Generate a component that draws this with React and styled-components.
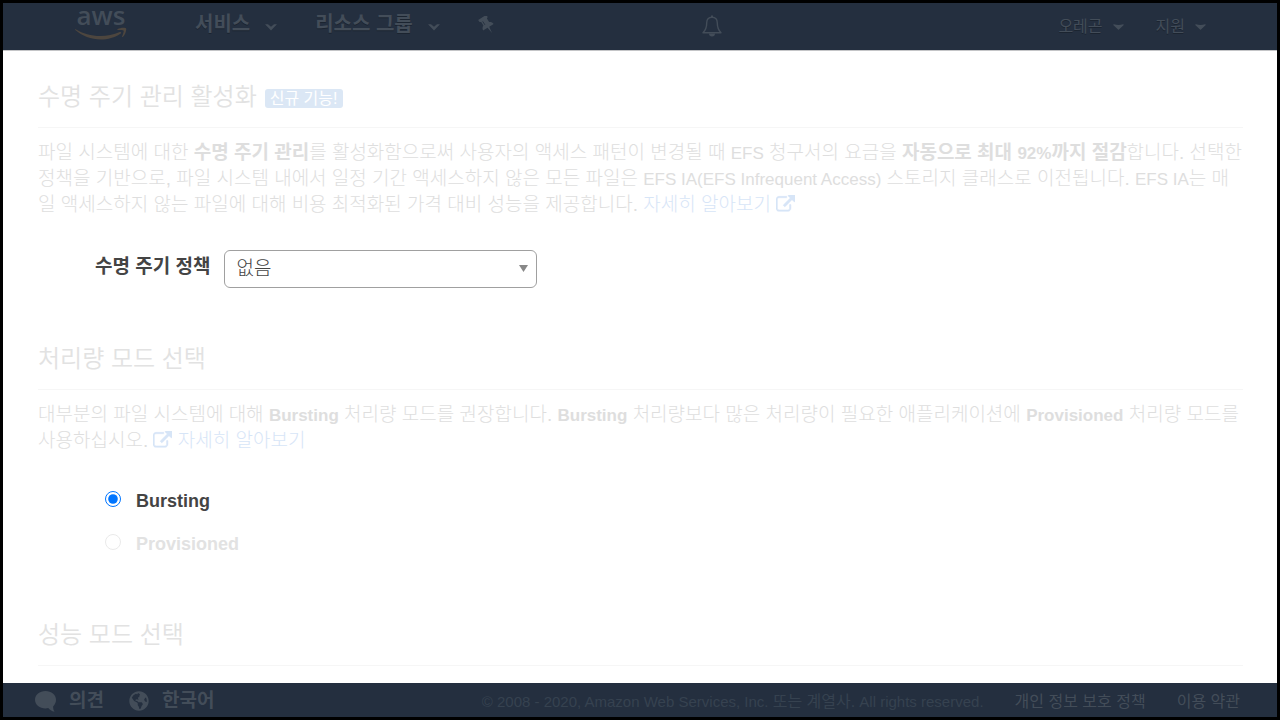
import React, { useState } from 'react'
import styled, { createGlobalStyle } from 'styled-components'
import { FaGlobeAmericas } from 'react-icons/fa'

const GlobalStyle = createGlobalStyle`
    *{
        box-sizing:border-box;
    }
    body{
        margin:0;
        font-family:'Liberation Sans', 'Noto Sans CJK KR', sans-serif;
    }
`
const Page = styled.div`
    min-height:100vh;
    display:flex;
    flex-direction:column;
    border:3px solid #000;
    background:#fff;
`
const Header = styled.header`
    height:48px;
    display:flex;
    align-items:flex-start;
    padding:0 71px 0 72px;
    background:#242f3f;
    border-bottom:1px solid #c4c5c7;
    color:#434d59;
`
const Logo = styled.a`
    width:52px;
    display:flex;
    flex-direction:column;
    align-items:center;
    color:#434d59;
    text-decoration:none;
    font:600 26px/24px 'Open Sans', sans-serif;
`
const Smile = styled.svg`
    width:52px;
    height:13px;
    fill:#4d463f;
`
const Nav = styled.nav`
    display:flex;
    align-items:center;
    height:42px;
    gap:38px;
    margin-left:68px;
`
const NavButton = styled.button`
    display:flex;
    align-items:center;
    gap:${props => props.$small ? '10px' : '15px'};
    padding:0;
    border:0;
    background:none;
    color:inherit;
    font-family:inherit;
    font-size:${props => props.$small ? '16px' : '20px'};
    font-weight:${props => props.$small ? 400 : 700};
    line-height:26px;
    text-shadow:0 1px 0 #1b2430;

    svg{
        display:block;
        margin-top:${props => props.$small ? '0' : '6px'};
    }
`
const PinButton = styled(NavButton)`
    svg{
        margin-top:2px;
    }
`
const Account = styled.div`
    display:flex;
    align-items:center;
    gap:32px;
    height:48px;
    margin-left:336px;
`
const BellButton = styled(NavButton)`
    height:46px;
    margin-left:auto;
`
const Main = styled.main`
    flex:1;
    padding:26px 34px 17px 35px;
    color:#dedede;
    font-size:19px;
    line-height:26px;
    font-weight:300;
`
const Section = styled.section`
    & + &{
        margin-top:51px;
    }
`
const Title = styled.h2`
    display:flex;
    align-items:center;
    gap:8px;
    margin:0;
    padding:2px 0 12px;
    border-bottom:1px solid #f6f6f6;
    color:#e2e2e2;
    font-size:24px;
    line-height:36px;
    font-weight:350;
`
const Badge = styled.span`
    height:19px;
    margin-top:2px;
    padding:0 5px;
    border-radius:3px;
    background:#dbe7f5;
    color:#fff;
    font-size:16px;
    line-height:19px;
    font-weight:400;
`
const Text = styled.p`
    margin:12px -2px 0 0;

    b{
        font-weight:700;
    }
`
const Latin = styled.span`
    font-size:17px;
    line-height:1;
`
const MoreLink = styled.a`
    color:#d7e5f7;
    text-decoration:none;

    svg{
        width:19px;
        height:19px;
        vertical-align:-3px;
        fill:currentColor;
        stroke:currentColor;
        stroke-width:50px;
    }
`
const Field = styled.div`
    display:flex;
    align-items:center;
    gap:14px;
    margin:32px 0 0 57px;
    color:#444;
`
const FieldLabel = styled.label`
    padding-bottom:4px;
    font-weight:700;
`
const SelectBox = styled.div`
    position:relative;
    flex:0 1 313px;

    svg{
        position:absolute;
        right:9px;
        top:15px;
        fill:#888;
        pointer-events:none;
    }
`
const Select = styled.select`
    display:block;
    width:100%;
    height:38px;
    padding:0 11px 2px;
    appearance:none;
    border:1px solid #a0a0a0;
    border-radius:6px;
    background:#fff;
    color:#444;
    font-family:inherit;
    font-size:19px;
    font-weight:300;
`
const Options = styled.div`
    margin:24px 0 0 67px;
`
const Option = styled.label`
    display:flex;
    align-items:center;
    gap:15px;
    height:43px;
    color:${props => props.$active ? '#444' : '#e2e2e2'};
    font-size:18px;
    font-weight:700;

    input{
        width:16px;
        height:16px;
        margin:0 0 2px;
        opacity:${props => props.$active ? 1 : 0.15};
    }
    span{
        padding-top:2px;
    }
`
const Footer = styled.footer`
    height:34px;
    display:flex;
    align-items:center;
    padding:2px 37px 0 32px;
    background:#242f3f;
    color:#434d59;
`
const FooterButton = styled.button`
    display:flex;
    align-items:center;
    gap:13px;
    margin-right:25px;
    padding:0;
    border:0;
    background:none;
    color:inherit;
    font-family:inherit;
    font-size:19px;
    font-weight:700;
    line-height:26px;
`
const Copyright = styled.span`
    margin-left:auto;
    padding-top:2px;
    color:#364250;
    font-size:15px;
    line-height:26px;

    span{
        font-size:16px;
        line-height:1;
    }
`
const FooterLink = styled.a`
    margin-left:31px;
    padding-top:2px;
    color:inherit;
    font-size:16px;
    line-height:26px;
    text-decoration:none;
`

const Chevron = () => (
    <svg width="12" height="8" viewBox="0 0 12 8" fill="currentColor">
        <path d="M0 1.2h3L6 3.8l3-2.6h3L6 7.6z"/>
    </svg>
)

const Caret = () => (
    <svg width="11" height="6" viewBox="0 0 11 6" fill="currentColor">
        <path d="M1 .3Q5.500 1.600 10 .3q1.300.1.500 1L6 5.600q-.5.400-1 0L.5 1.300Q-.3.400 1 .3z"/>
    </svg>
)

const Pin = () => (
    <svg width="18" height="18" viewBox="0 0 18 18" fill="currentColor">
        <path transform="rotate(-32 9 9)" d="M4.200 0h9.600v2.600l-1.400.8v4.200c1.600.7 2.600 1.900 2.800 4H10L9 18.500l-1-6.900H2.800c.2-2.100 1.200-3.300 2.800-4V3.400l-1.400-.8z"/>
        <path transform="rotate(-32 9 9)" d="M7.300 3.600v4.200" stroke="#242f3f" strokeWidth=".8"/>
    </svg>
)

const Bell = () => (
    <svg width="20" height="22" viewBox="0 0 20 22" fill="none" stroke="currentColor" strokeWidth="1.400">
        <path d="M10 2.200C6.300 2.200 4.700 4.700 4.700 8c0 5-1.200 7.300-3.700 9.800h18c-2.500-2.500-3.700-4.800-3.700-9.800 0-3.300-1.600-5.800-5.300-5.800z" strokeLinejoin="round"/>
        <path d="M10 .5v1.700" strokeWidth="2"/>
        <path d="M7 18.400a3 3 0 0 0 6 0z" fill="currentColor" stroke="none"/>
    </svg>
)

const Bubble = () => (
    <svg width="21" height="21" viewBox="0 0 21 21" fill="currentColor">
        <path d="M10.500 0C4.700 0 0 3.800 0 8.700s4.700 8.700 10.500 8.700c1 0 1.900-.1 2.800-.3 1.300 1.600 3.500 3.200 6.200 3.700-1-1.500-1.500-3.700-1.300-5.600 1.700-1.600 2.800-3.900 2.800-6.500C21 3.800 16.300 0 10.500 0z"/>
    </svg>
)

const External = () => (
    <svg viewBox="0 0 1792 1792">
        <path d="M1408 928v320q0 119-84.500 203.500t-203.500 84.500h-832q-119 0-203.500-84.500t-84.500-203.500v-832q0-119 84.500-203.500t203.500-84.500h704q14 0 23 9t9 23v64q0 14-9 23t-23 9h-704q-66 0-113 47t-47 113v832q0 66 47 113t113 47h832q66 0 113-47t47-113v-320q0-14 9-23t23-9h64q14 0 23 9t9 23zm384-864v512q0 26-19 45t-45 19-45-19l-176-176-652 652q-10 10-23 10t-23-10l-114-114q-10-10-10-23t10-23l652-652-176-176q-19-19-19-45t19-45 45-19h512q26 0 45 19t19 45z"/>
    </svg>
)

const App = () => {
    const [policy,setPolicy] = useState('none')
    const [mode,setMode] = useState('Bursting')

  return (
    <Page>
        <GlobalStyle/>
        <Header>
            <Logo href="#">
                aws
                <Smile viewBox="0 0 52 13">
                    <path d="M.6 2.200C8 6.600 16 9 25.500 9c6.500 0 13-1.400 19.300-4 1.200-.4 2 .8.900 1.600C40 10.800 32.500 12.600 25.800 12.600 16 12.600 7 8.900.3 3.100c-.5-.5-.2-1.200.3-.9z"/>
                    <path d="M42.500 2.300c2.300-1.600 6-1.900 8-1.300.8.300.8.900.7 1.700-.3 2.600-1.500 5.500-3.400 7.200-.5.400-.9.100-.7-.4.800-1.900 2-5 1.600-5.900-.5-.9-3.600-.8-5.800-.5-.7 0-.9-.4-.4-.8z"/>
                </Smile>
            </Logo>
            <Nav>
                <NavButton>서비스 <Chevron/></NavButton>
                <NavButton>리소스 그룹 <Chevron/></NavButton>
                <PinButton aria-label="고정"><Pin/></PinButton>
            </Nav>
            <BellButton $small aria-label="알림"><Bell/></BellButton>
            <Account>
                <NavButton $small>오레곤 <Caret/></NavButton>
                <NavButton $small>지원 <Caret/></NavButton>
            </Account>
        </Header>
        <Main>
            <Section>
                <Title>수명 주기 관리 활성화 <Badge>신규 기능!</Badge></Title>
                <Text>
                    파일 시스템에 대한 <b>수명 주기 관리</b>를 활성화함으로써 사용자의 액세스 패턴이 변경될 때 <Latin>EFS</Latin> 청구서의 요금을 <b>자동으로 최대 <Latin>92%</Latin>까지 절감</b>합니다. 선택한 정책을 기반으로, 파일 시스템 내에서 일정 기간 액세스하지 않은 모든 파일은 <Latin>EFS IA(EFS Infrequent Access)</Latin> 스토리지 클래스로 이전됩니다. <Latin>EFS IA</Latin>는 매일 액세스하지 않는 파일에 대해 비용 최적화된 가격 대비 성능을 제공합니다. <MoreLink href="#">자세히 알아보기 <External/></MoreLink>
                </Text>
                <Field>
                    <FieldLabel htmlFor="policy">수명 주기 정책</FieldLabel>
                    <SelectBox>
                        <Select id="policy" value={policy} onChange={(e)=>{setPolicy(e.target.value)}}>
                            <option value="none">없음</option>
                        </Select>
                        <svg width="9" height="7" viewBox="0 0 9 7"><path d="M0 0h9L4.500 7z"/></svg>
                    </SelectBox>
                </Field>
            </Section>
            <Section>
                <Title>처리량 모드 선택</Title>
                <Text>
                    대부분의 파일 시스템에 대해 <b><Latin>Bursting</Latin></b> 처리량 모드를 권장합니다. <b><Latin>Bursting</Latin></b> 처리량보다 많은 처리량이 필요한 애플리케이션에 <b><Latin>Provisioned</Latin></b> 처리량 모드를 사용하십시오. <MoreLink href="#"><External/> 자세히 알아보기</MoreLink>
                </Text>
                <Options>
                    {['Bursting','Provisioned'].map((name)=>(
                        <Option key={name} $active={mode === name}>
                            <input type="radio" name="mode" checked={mode === name} onChange={()=>{setMode(name)}}/>
                            <span>{name}</span>
                        </Option>
                    ))}
                </Options>
            </Section>
            <Section>
                <Title>성능 모드 선택</Title>
            </Section>
        </Main>
        <Footer>
            <FooterButton><Bubble/> 의견</FooterButton>
            <FooterButton><FaGlobeAmericas size={20}/> 한국어</FooterButton>
            <Copyright>© 2008 - 2020, Amazon Web Services, Inc. <span>또는 계열사.</span> All rights reserved.</Copyright>
            <FooterLink href="#">개인 정보 보호 정책</FooterLink>
            <FooterLink href="#">이용 약관</FooterLink>
        </Footer>
    </Page>
  )
}

export default App
